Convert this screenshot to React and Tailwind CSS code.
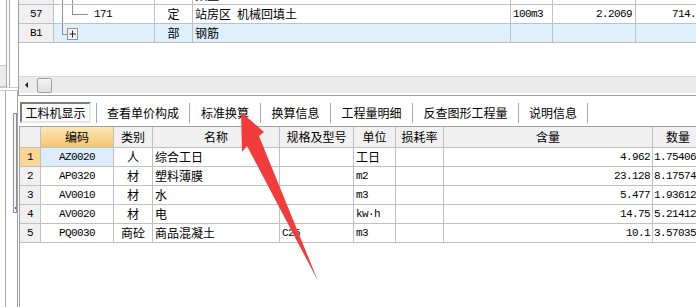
import React from 'react'

const mono = "font-['Liberation_Mono',monospace] text-[11px] tracking-[-0.6px]"
const line = 'border-[#c0c0c0]'

const gridRows = [
  { n: '1', code: 'AZ0020', type: '人', name: '综合工日', spec: '', unit: '工日', amt: '4.962', qty: '1.75406' },
  { n: '2', code: 'AP0320', type: '材', name: '塑料薄膜', spec: '', unit: 'm2', amt: '23.128', qty: '8.17574' },
  { n: '3', code: 'AV0010', type: '材', name: '水', spec: '', unit: 'm3', amt: '5.477', qty: '1.93612' },
  { n: '4', code: 'AV0020', type: '材', name: '电', spec: '', unit: 'kw·h', amt: '14.75', qty: '5.21412' },
  { n: '5', code: 'PQ0030', type: '商砼', name: '商品混凝土', spec: 'C25', unit: 'm3', amt: '10.1', qty: '3.57035' },
]

const tabs = [
  { label: '查看单价构成', w: 'w-[92px]' },
  { label: '标准换算', w: 'w-[70px]' },
  { label: '换算信息', w: 'w-[69px]' },
  { label: '工程量明细', w: 'w-[81px]' },
  { label: '反查图形工程量', w: 'w-[105px]' },
  { label: '说明信息', w: 'w-[68px]' },
]

const isLatin = (s) => /^[\x00-\x7F·]*$/.test(s)

const LeftStrip = () => {
  return (
    <div className='w-[18px] shrink-0 h-full flex flex-col'>
      <div className='h-[87px] flex'>
        <div className='w-[6px] flex flex-col'>
          <div className='h-[65px]' />
          <div className='h-[22px] bg-[#ececec] border-y border-[#c8c8c8]' />
        </div>
        <div className='w-[4px] border-x border-[#a8a8a8]' />
      </div>
      <div className='h-[4px] border-y border-[#c8c8c8]' />
      <div className='flex-1 flex'>
        <div className='w-[6px] border-r border-[#a8a8a8]' />
        <div className='w-[7px]' />
        <div className='w-[4px] flex flex-col'>
          <div className='h-[22px]' />
          <div className='h-[100px] border border-[#909090] bg-[#f4f4f4] flex flex-col'>
            <div className='h-[93px]' />
            <div className='w-[1px] h-[2px] bg-[#3050e0] ml-[1px]' />
          </div>
        </div>
        <div className='w-[1px] bg-[#a0a0a0]' />
      </div>
    </div>
  )
}

const TopTable = () => {
  return (
    <div className='flex flex-col mt-[-14px]'>
      {/* row hidden above the scroll edge */}
      <div className='flex h-[19px] border-b border-[#c0c0c0]'>
        <div className='w-[35px] shrink-0 border-r border-[#c0c0c0] bg-[#f0f0f0]' />
        <div className='w-[101px] shrink-0 border-r border-[#c0c0c0]'>
          <svg width='100' height='18'>
            <line x1='8.5' y1='0' x2='8.5' y2='18' stroke='#909090' />
            <line x1='18.5' y1='0' x2='18.5' y2='18' stroke='#909090' />
          </svg>
        </div>
        <div className='w-[38px] shrink-0 border-r border-[#c0c0c0]' />
        <div className='w-[318px] shrink-0 border-r border-[#c0c0c0] pl-[2px] text-[12px] leading-[18px]'>数量=</div>
        <div className='w-[42px] shrink-0 border-r border-[#c0c0c0]' />
        <div className='w-[83px] shrink-0 border-r border-[#c0c0c0]' />
        <div className='flex-1' />
      </div>
      <div className='flex h-[19px] border-b border-[#c0c0c0] text-[12px] leading-[18px]'>
        <div className={`w-[35px] shrink-0 border-r border-[#c0c0c0] bg-[#f0f0f0] text-center ${mono}`}>57</div>
        <div className='w-[101px] shrink-0 border-r border-[#c0c0c0] flex items-center'>
          <svg width='40' height='18' className='shrink-0'>
            <line x1='8.5' y1='0' x2='8.5' y2='18' stroke='#909090' />
            <line x1='18.5' y1='0' x2='18.5' y2='9.5' stroke='#909090' />
            <line x1='18' y1='9.5' x2='34' y2='9.5' stroke='#909090' />
          </svg>
          <span className={mono}>171</span>
        </div>
        <div className='w-[38px] shrink-0 border-r border-[#c0c0c0] text-center'>定</div>
        <div className='w-[318px] shrink-0 border-r border-[#c0c0c0] pl-[2px] whitespace-pre'>站房区{'\u2002'}机械回填土</div>
        <div className={`w-[42px] shrink-0 border-r border-[#c0c0c0] pl-[2px] ${mono}`}>100m3</div>
        <div className={`w-[83px] shrink-0 border-r border-[#c0c0c0] text-right pr-[3px] ${mono}`}>2.2069</div>
        <div className={`flex-1 pl-[36px] ${mono}`}>714.</div>
      </div>
      <div className='flex h-[19px] border-b border-[#c0c0c0] text-[12px] leading-[18px]'>
        <div className={`w-[35px] shrink-0 border-r border-[#c0c0c0] bg-[#f0f0f0] text-center ${mono}`}>B1</div>
        <div className='w-[101px] shrink-0 border-r border-[#c0c0c0] bg-[#ddf0fc]'>
          <svg width='40' height='18'>
            <line x1='8.5' y1='0' x2='8.5' y2='10.5' stroke='#909090' />
            <line x1='8' y1='10.5' x2='13' y2='10.5' stroke='#909090' />
            <rect x='13.5' y='4.5' width='10' height='11' fill='#f4f4f4' stroke='#909090' />
            <line x1='15.5' y1='10' x2='22' y2='10' stroke='#202020' />
            <line x1='18.5' y1='6.5' x2='18.5' y2='13.5' stroke='#202020' />
          </svg>
        </div>
        <div className='w-[38px] shrink-0 border-r border-[#c0c0c0] bg-[#ddf0fc] text-center'>部</div>
        <div className='w-[318px] shrink-0 border-r border-[#c0c0c0] bg-[#ddf0fc] pl-[2px]'>钢筋</div>
        <div className='w-[42px] shrink-0 border-r border-[#c0c0c0] bg-[#ddf0fc]' />
        <div className='w-[83px] shrink-0 border-r border-[#c0c0c0] bg-[#ddf0fc]' />
        <div className='flex-1 bg-[#ddf0fc]' />
      </div>
    </div>
  )
}

const App = () => {
  return (
    <div className="w-[696px] h-[307px] overflow-hidden relative bg-white flex text-black font-['Noto_Sans_CJK_SC',sans-serif]">
      <LeftStrip />

      <div className='flex-1 flex flex-col min-w-0'>
        {/* upper grid panel */}
        <div className='h-[96px] shrink-0 border-l border-b border-[#a0a0a0] flex flex-col overflow-hidden'>
          <TopTable />
          <div className='flex-1' />
          <div className='h-[17px] bg-[#ebebeb] border-t border-[#dcdcdc] flex items-center'>
            <div className='w-[18px] flex justify-end pr-[9px]'>
              <span className='w-0 h-0 border-y-[3px] border-y-transparent border-r-[3px] border-r-[#202020]' />
            </div>
            <div className='w-[15px] h-[15px] rounded-[2px] border border-[#a0a0a0] bg-gradient-to-b from-[#f6f6f6] to-[#dedede]' />
          </div>
          <div className='h-[2px]' />
        </div>

        {/* tabs */}
        <div className='flex items-center pl-[2px] pt-[5px] h-[28px] shrink-0'>
          <div className='w-[71px] h-[21px] border-2 border-t-[#7c7c7c] border-l-[#7c7c7c] border-b-[#e8e8e8] border-r-[#e8e8e8] bg-[#fafafa] text-[12px] leading-[17px] text-center'>
            工料机显示
          </div>
          <div className='w-[5px]' />
          {tabs.map((t) => (
            <React.Fragment key={t.label}>
              <div className='w-[1px] h-[20px] bg-[#a8a8a8]' />
              <div className={`${t.w} text-center text-[12px] leading-[20px]`}>{t.label}</div>
            </React.Fragment>
          ))}
          <div className='w-[1px] h-[20px] bg-[#a8a8a8]' />
        </div>

        {/* lower grid */}
        <div className='flex-1 ml-[1px] mt-[2px] border-l border-t border-[#a0a0a0] flex flex-col text-[12px]'>
          <div className='flex h-[21px] border-b border-[#c0c0c0] leading-[20px]'>
            <div className={`w-[21px] shrink-0 border-r ${line} bg-[#f0f0f0]`} />
            <div className={`w-[73px] shrink-0 border-r ${line} bg-gradient-to-b from-[#fce6b8] to-[#f3c46e] text-center`}>编码</div>
            <div className={`w-[39px] shrink-0 border-r ${line} bg-[#f0f0f0] text-center`}>类别</div>
            <div className={`w-[127px] shrink-0 border-r ${line} bg-[#f0f0f0] text-center`}>名称</div>
            <div className={`w-[74px] shrink-0 border-r ${line} bg-[#f0f0f0] text-center`}>规格及型号</div>
            <div className={`w-[42px] shrink-0 border-r ${line} bg-[#f0f0f0] text-center`}>单位</div>
            <div className={`w-[48px] shrink-0 border-r ${line} bg-[#f0f0f0] text-center`}>损耗率</div>
            <div className={`w-[209px] shrink-0 border-r ${line} bg-[#f0f0f0] text-center`}>含量</div>
            <div className='flex-1 bg-[#f0f0f0] pl-[13px] whitespace-nowrap'>数量</div>
          </div>

          {gridRows.map((r, i) => (
            <div key={r.n} className='flex h-[19px] border-b border-[#c0c0c0] leading-[18px]'>
              <div className={`w-[21px] shrink-0 border-r ${line} text-center ${mono} ${i === 0 ? 'bg-[#fbd592]' : 'bg-[#f0f0f0]'}`}>{r.n}</div>
              <div className={`w-[73px] shrink-0 border-r ${line} text-center ${mono} ${i === 0 ? 'bg-[#ddedfc]' : ''}`}>{r.code}</div>
              <div className={`w-[39px] shrink-0 border-r ${line} text-center`}>{r.type}</div>
              <div className={`w-[127px] shrink-0 border-r ${line} pl-[2px]`}>{r.name}</div>
              <div className={`w-[74px] shrink-0 border-r ${line} pl-[2px] ${mono}`}>{r.spec}</div>
              <div className={`w-[42px] shrink-0 border-r ${line} pl-[2px] ${isLatin(r.unit) ? mono : ''}`}>{r.unit}</div>
              <div className={`w-[48px] shrink-0 border-r ${line}`} />
              <div className={`w-[209px] shrink-0 border-r ${line} text-right pr-[2px] ${mono}`}>{r.amt}</div>
              <div className={`flex-1 pl-[1px] whitespace-nowrap overflow-hidden ${mono}`}>{r.qty}</div>
            </div>
          ))}
          <div className='flex-1' />
        </div>
      </div>

      {/* annotation arrow */}
      <svg className='absolute inset-0 pointer-events-none' width='696' height='307'>
        <polygon
          points='241,112 264,132 259,136 318,281 247,146 242,152'
          fill='#f23c3c'
        />
      </svg>
    </div>
  )
}

export default App
